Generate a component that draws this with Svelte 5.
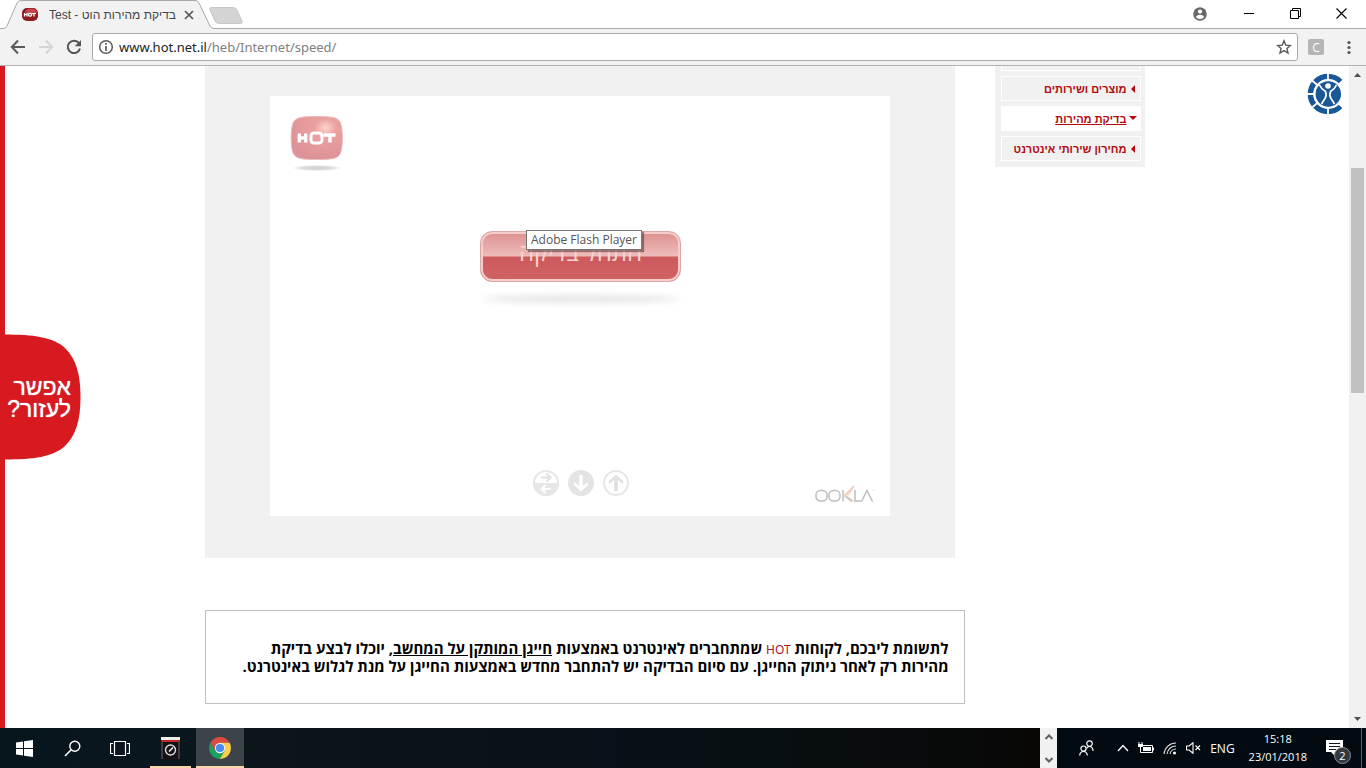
<script>
  const menu = [
    { label: 'מוצרים ושירותים', open: false },
    { label: 'בדיקת מהירות', open: true },
    { label: 'מחירון שירותי אינטרנט', open: false }
  ];
  let address = $state('www.hot.net.il/heb/Internet/speed/');
  let split = $derived(address.indexOf('/') < 0 ? address.length : address.indexOf('/'));
</script>

<div class="screen">
  <header class="titlebar">
    <div class="tab">
      <svg class="tabshape" width="246" height="29" viewBox="0 0 246 29" aria-hidden="true">
        <path d="M0 28.5H3Q6 28.5 7 26L17 3Q18 .5 21 .5H195Q198 .5 199 3L210 26Q211 28.5 214 28.5V29H0Z" fill="#f2f2f2" />
        <path d="M0 28.5H3Q6 28.5 7 26L17 3Q18 .5 21 .5H195Q198 .5 199 3L210 26Q211 28.5 214 28.5H246" fill="none" stroke="#aaa8aa" />
        <path d="M211 7.500H233Q236 7.500 237 10L242 21Q243 23.500 240 23.500H219Q216 23.500 215 21L210 10Q209 7.500 211 7.500Z" fill="#d4d4d4" stroke="#c8c8c8" />
      </svg>
      <div class="tabcontent">
        <svg width="16" height="16" viewBox="0 0 16 16" aria-hidden="true">
          <rect x="0" y="1" width="16" height="13" rx="5" fill="#8d1b20" /><ellipse cx="9" cy="5" rx="6" ry="3.500" fill="#c6444a" />
          <path d="M2.500 6V9.500M2 7.700H5M5 6V9.500M10 6.500H14M12 6V9.500" stroke="#fff" stroke-width="1.200" /><rect x="6.500" y="6.300" width="3" height="2.800" rx="1" fill="none" stroke="#fff" stroke-width="1.200" />
        </svg>
        <span class="tabtitle" dir="rtl">בדיקת מהירות הוט - Test</span>
        <button aria-label="Close tab"><svg width="10" height="10" viewBox="0 0 10 10"><path d="M1 1L9 9M9 1L1 9" stroke="#555" stroke-width="1.700" /></svg></button>
      </div>
    </div>
    <div class="winbuttons">
      <button aria-label="Profile"><svg width="14" height="14" viewBox="0 0 14 14"><circle cx="7" cy="7" r="6.800" fill="#696969" /><circle cx="7" cy="4.600" r="2.100" fill="#fff" /><path d="M2.800 9.500Q4.500 7.800 7 7.800T11.200 9.500Q10 12 7 12T2.800 9.500" fill="#fff" /></svg></button>
      <button aria-label="Minimize"><svg width="10" height="11" viewBox="0 0 10 11"><path d="M0 5.500H10" stroke="#000" /></svg></button>
      <button aria-label="Restore"><svg width="11" height="11" viewBox="0 0 11 11"><path d="M.5 2.500H8.500V10.500H.5ZM2.500 2V.5H10.500V8.500H9" fill="none" stroke="#000" /></svg></button>
      <button aria-label="Close"><svg width="11" height="11" viewBox="0 0 11 11"><path d="M.5 .5L10.500 10.500M10.500 .5L.5 10.500" stroke="#000" stroke-width="1.100" /></svg></button>
    </div>
  </header>

  <div class="toolbar">
    <button aria-label="Back"><svg width="16" height="16" viewBox="0 0 16 16"><path d="M15 8H2M8 1.500L1.800 8L8 14.500" fill="none" stroke="#5a5a5a" stroke-width="2" /></svg></button>
    <button aria-label="Forward"><svg width="16" height="16" viewBox="0 0 16 16"><path d="M1 8H14M8 1.500L14.200 8L8 14.500" fill="none" stroke="#d5d5d5" stroke-width="2" /></svg></button>
    <button aria-label="Reload"><svg width="16" height="16" viewBox="0 0 16 16"><path d="M13 4.200A6.200 6.200 0 1 0 14 9.500" fill="none" stroke="#555" stroke-width="2" /><path d="M15 1V7.200H8.800Z" fill="#555" /></svg></button>
    <div class="omnibox">
      <svg width="16" height="16" viewBox="0 0 16 16" aria-hidden="true"><circle cx="8" cy="8" r="6.300" fill="none" stroke="#5a5a5a" stroke-width="1.500" /><path d="M8 4V5.700M8 7V12" stroke="#5a5a5a" stroke-width="1.700" /></svg>
      <div class="urlwrap">
        <input aria-label="Address" bind:value={address} spellcheck="false" />
        <span class="url" aria-hidden="true">{address.slice(0, split)}<i>{address.slice(split)}</i></span>
      </div>
      <button aria-label="Bookmark"><svg width="16" height="16" viewBox="0 0 16 16"><path d="M8 1.800L9.800 6.100L14.400 6.500L10.900 9.500L12 14L8 11.600L4 14L5.100 9.500L1.600 6.500L6.200 6.100Z" fill="none" stroke="#5a5a5a" stroke-width="1.400" /></svg></button>
    </div>
    <button class="ext" aria-label="Extension C">C</button>
    <button aria-label="Menu"><svg width="16" height="16" viewBox="0 0 16 16"><circle cx="8" cy="3.500" r="1.600" fill="#555" /><circle cx="8" cy="8.500" r="1.600" fill="#555" /><circle cx="8" cy="13.500" r="1.600" fill="#555" /></svg></button>
  </div>

  <div class="viewport">
    <main class="page" dir="rtl">
      <div class="columns">
        <nav class="side">
          <div class="stub"></div>
          {#each menu as m}
            <a href="#menu" class:open={m.open}>
              <svg width="8" height="8" viewBox="0 0 8 8" aria-hidden="true"><path d={m.open ? 'M0 1H8L4 5Z' : 'M6 0V8L2 4Z'} fill="#b3080e" /></svg>
              <span>{m.label}</span>
            </a>
          {/each}
        </nav>
        <div class="content">
          <section class="panel">
            <div class="flash">
              <svg class="logo" width="56" height="56" viewBox="0 0 56 56" role="img" aria-label="HOT">
                <defs>
                  <radialGradient id="hot" cx=".67" cy=".26" r=".7"><stop offset="0" stop-color="#fad5cc" /><stop offset=".3" stop-color="#eca0a0" /><stop offset="1" stop-color="#de9398" /></radialGradient>
                  <radialGradient id="shade"><stop offset="0" stop-color="#cfcfcf" /><stop offset=".6" stop-color="#dcdcdc" /><stop offset="1" stop-color="#fff" /></radialGradient>
                </defs>
                <path d="M28 .5C46 .5 49 2 51.500 7C54 14 54 30 51.500 37C49 42 46 43.500 28 43.500S7 42 4 37C1.500 30 1.500 14 4 7C7 2 10 .5 28 .5Z" transform="translate(-1)" fill="url(#hot)" stroke="#eab9bb" />
                <path d="M9.300 17.500V26.500M9 22H15.500M15.700 17.500V26.500M33.500 19H45.500M40 19V26.500" fill="none" stroke="#fff" stroke-width="3.400" />
                <rect x="21" y="17" width="11" height="10" rx="3" fill="none" stroke="#fff" stroke-width="3" />
                <ellipse cx="27" cy="52" rx="25" ry="3" fill="url(#shade)" />
              </svg>
              <div class="startwrap">
                <button class="start">התחל בדיקה</button>
                <div class="tooltip" dir="ltr" role="tooltip">Adobe Flash Player</div>
                <div class="startshadow"></div>
              </div>
              <div class="flashfoot" dir="ltr">
                <div class="steps">
                  <svg width="28" height="28" viewBox="0 0 28 28" aria-hidden="true"><circle cx="14" cy="14" r="12" fill="#fff" stroke="#e6e6e6" stroke-width="2" /><path d="M1 14H27A13 13 0 0 1 1 14Z" fill="#e6e6e6" /><path d="M9 8.500H18M14.500 4.500L18.500 8.500L14.500 12.500" fill="none" stroke="#e0e0e0" stroke-width="2" /><path d="M19 20H10M13.500 16L9.500 20L13.500 24" fill="none" stroke="#fff" stroke-width="2" /></svg>
                  <svg width="28" height="28" viewBox="0 0 28 28" aria-hidden="true"><circle cx="14" cy="14" r="13" fill="#e4e4e4" /><path d="M14 6V19" stroke="#fff" stroke-width="3.600" /><path d="M7 13V16L14 22.500L21 16V13L14 18.500Z" fill="#fff" /></svg>
                  <svg width="28" height="28" viewBox="0 0 28 28" aria-hidden="true"><circle cx="14" cy="14" r="12" fill="#fff" stroke="#e6e6e6" stroke-width="2" /><path d="M14 22V9" stroke="#e0e0e0" stroke-width="3.600" /><path d="M7 15V12L14 5.500L21 12V15L14 9.500Z" fill="#e0e0e0" /></svg>
                </div>
                <svg class="ookla" width="60" height="20" viewBox="0 0 60 20" role="img" aria-label="OOKLA">
                  <path d="M28 12L40 1L36 9L33 12L40.500 17.500H36L30 13.500Z" fill="#f8dfcd" />
                  <g fill="none" stroke="#bdbdbd" stroke-width="1.500"><rect x="1" y="6.500" width="11" height="10.500" rx="4.500" /><rect x="14" y="6.500" width="11" height="10.500" rx="4.500" /><path d="M28 6V17.500M31 12.500L37 17.500M40 6V17H46M46.500 17.500L52 6.500L57.500 17.500" /></g>
                  <path d="M29 12L39 2" stroke="#efc9b5" stroke-width="1.500" /><circle cx="58.500" cy="6" r=".6" fill="#bbb" />
                </svg>
              </div>
            </div>
          </section>
          <section class="notice">
            <p>
              לתשומת ליבכם, לקוחות <span class="hot">HOT</span> שמתחברים לאינטרנט באמצעות <u>חייגן המותקן על המחשב</u>, יוכלו לבצע בדיקת<br />
              מהירות רק לאחר ניתוק החייגן. עם סיום הבדיקה יש להתחבר מחדש באמצעות החייגן על מנת לגלוש באינטרנט.
            </p>
          </section>
        </div>
      </div>
    </main>

    <button class="help" dir="rtl">
      <svg width="76" height="126" viewBox="0 0 76 126" aria-hidden="true"><path d="M0 .5C28 .5 48 3 60 14C71 25 75.500 40 75.500 63S71 101 60 112C48 123 28 125.500 0 125.500Z" fill="#d71920" /></svg>
      <span>אפשר<br />לעזור?</span>
    </button>

    <button class="access" aria-label="Accessibility">
      <svg width="36" height="42" viewBox="0 0 36 42">
        <path d="M34.400 7.600A19 19 0 1 0 34.400 34.400L31.200 31.200A14.500 14.500 0 1 1 31.200 10.800Z" fill="#1a5796" />
        <path d="M34.400 7.600A19 19 0 1 0 34.400 34.400" fill="none" stroke="#1a5796" stroke-width="2.500" />
        <circle cx="21.300" cy="21" r="15" fill="#fff" />
        <path d="M21 0V8M21 34V42M0 21H8M5 7.500L11 12.500M5 34.500L11 29.500" stroke="#fff" stroke-width="1.800" />
        <circle cx="21.300" cy="21" r="12.700" fill="#1a5796" />
        <circle cx="21" cy="13" r="2.800" fill="#fff" />
        <path d="M12.500 12Q14.500 16.500 18.500 18.500Q20 22 18 25.500Q16 28.500 14.500 31M29.500 12Q27.500 16.500 23.500 18.500Q22 22 24 25.500Q26 28.500 27.500 31" fill="none" stroke="#fff" stroke-width="1.700" />
      </svg>
    </button>

    <div class="scrollbar" aria-hidden="true">
      <svg width="7" height="4" viewBox="0 0 7 4"><path d="M0 4L3.500 0L7 4Z" fill="#505050" /></svg>
      <div class="track"><div class="thumb"></div></div>
      <svg width="7" height="4" viewBox="0 0 7 4"><path d="M0 0L3.500 4L7 0Z" fill="#505050" /></svg>
    </div>
  </div>

  <footer class="taskbar">
    <button class="task" aria-label="Start"><svg width="17" height="17" viewBox="0 0 17 17"><path d="M0 2.500L7 1.500V8H0ZM8 1.300L17 0V8H8ZM0 9H7V15.500L0 14.500ZM8 9H17V17L8 15.700Z" fill="#fff" /></svg></button>
    <button class="task" aria-label="Search"><svg width="17" height="17" viewBox="0 0 17 17"><circle cx="10.800" cy="6.200" r="5" fill="none" stroke="#fff" stroke-width="1.400" /><path d="M7.200 9.800L1 16" stroke="#fff" stroke-width="1.600" /></svg></button>
    <button class="task" aria-label="Task view"><svg width="20" height="15" viewBox="0 0 20 15"><path d="M4.500 .5H15.500V14.500H4.500ZM3 2.500H.5V12.500H3M17 2.500H19.500V12.500H17" fill="none" stroke="#fff" stroke-width="1.200" /></svg></button>
    <button class="task running" aria-label="Disk utility">
      <svg width="19" height="24" viewBox="0 0 19 24"><path d="M1 3H18L19 24H0Z" fill="#151313" /><path d="M1 4V23M18 4V23" stroke="#6b6b6b" /><rect x="0" y="1" width="19" height="3" fill="#eee" /><rect x="1" y="4" width="17" height="2" fill="#c12a29" /><circle cx="9.500" cy="14" r="5" fill="none" stroke="#ddd" stroke-width="1.400" /><path d="M8 15.500L12 11.500" stroke="#fff" stroke-width="1.500" /></svg>
    </button>
    <button class="task running active" aria-label="Chrome">
      <svg width="22" height="22" viewBox="0 0 22 22"><path d="M11 5.500H20.500A11 11 0 0 1 11 22Z" fill="#fdd04c" /><path d="M11 11L15.800 13.700L11 22A11 11 0 0 1 1.500 5.500L6.200 13.700Z" fill="#1da260" /><path d="M11 5.500H20.500A11 11 0 0 0 1.500 5.500L6.200 13.500Z" fill="#dd4b3e" /><circle cx="11" cy="11" r="5.200" fill="#f4f4f4" /><circle cx="11" cy="11" r="4.100" fill="#4989f4" /></svg>
    </button>
    <div class="spacer"></div>
    <div class="deskscroll">
      <button aria-label="Scroll up"><svg width="8" height="6" viewBox="0 0 8 6"><path d="M.5 5L4 1.500L7.500 5" fill="none" stroke="#606060" stroke-width="2" /></svg></button>
      <button aria-label="Scroll down"><svg width="8" height="6" viewBox="0 0 8 6"><path d="M.5 1L4 4.500L7.500 1" fill="none" stroke="#606060" stroke-width="2" /></svg></button>
    </div>
    <div class="tray">
      <button class="people" aria-label="People"><svg width="15" height="16" viewBox="0 0 15 16"><g fill="none" stroke="#fff" stroke-width="1.200"><circle cx="10.500" cy="3.600" r="2.800" /><path d="M7.500 8.500Q8.500 6.500 10.500 6.500Q13.500 6.500 14.200 11" /><circle cx="4.500" cy="8.600" r="2.600" /><path d="M.7 15.500Q1 11.500 4.500 11.500T8.300 15.500" /></g></svg></button>
      <button aria-label="Show hidden icons"><svg width="12" height="8" viewBox="0 0 12 8"><path d="M1 7L6 1.500L11 7" fill="none" stroke="#fff" stroke-width="1.300" /></svg></button>
      <button aria-label="Battery"><svg width="16" height="12" viewBox="0 0 16 12"><path d="M5 3.500H14.500V10.500H2.500V7" fill="none" stroke="#fff" /><rect x="5" y="5" width="8" height="4" fill="#fff" /><path d="M15.500 5.500V8.500M1 0V3M4 0V3M2.500 3V7" stroke="#fff" /><rect x="0" y="2" width="5" height="3" fill="#fff" /></svg></button>
      <button aria-label="Network"><svg width="14" height="14" viewBox="0 0 14 14"><g fill="none" stroke="#ddd" stroke-width="1.100"><path d="M1 13A12 12 0 0 1 13 2M4 13A9 9 0 0 1 13 5M7 13A6 6 0 0 1 13 8" /></g><circle cx="11.500" cy="12" r="1.500" fill="#fff" /></svg></button>
      <button aria-label="Volume muted"><svg width="15" height="12" viewBox="0 0 15 12"><path d="M.5 4H3L7 .8V11.200L3 8H.5ZM9.500 3.500L14 8M14 3.500L9.500 8" fill="none" stroke="#fff" stroke-width="1.100" /></svg></button>
      <span>ENG</span>
      <div class="clock"><span>15:18</span><span>23/01/2018</span></div>
      <button class="bell" aria-label="Notifications">
        <svg width="17" height="16" viewBox="0 0 17 16"><path d="M0 0H17V12H9V16L5 12H0Z" fill="#fff" /><path d="M3 3.500H14M3 6.500H14M3 9.500H10" stroke="#10151a" /></svg>
        <b>2</b>
      </button>
    </div>
  </footer>
</div>

<style>
  :global(body) { margin: 0; background: #fff; }
  .screen { display: flex; flex-direction: column; height: 100vh; overflow: hidden; font-family: "Open Sans", "Noto Sans", sans-serif; font-size: 12px; }
  button { border: 0; padding: 0; background: none; font: inherit; color: inherit; display: flex; align-items: center; justify-content: center; }
  svg { display: block; flex: none; }
  a { text-decoration: none; }

  .titlebar { display: flex; flex: none; height: 29px; background: linear-gradient(#aaa8aa, #aaa8aa) bottom / 100% 1px no-repeat #fff; justify-content: space-between; }
  .tab { display: grid; width: 246px; }
  .tabshape, .tabcontent { grid-area: 1 / 1; }
  .tabcontent { display: flex; align-items: center; padding-left: 22px; width: 172px; z-index: 1; height: 30px; }
  .tabtitle { flex: 1; margin: 0 6px 0 11px; color: #444; white-space: nowrap; overflow: hidden; text-align: left; font-family: "Liberation Sans", sans-serif; }
  .winbuttons { display: flex; align-items: center; height: 27px; padding-right: 2px; }
  .winbuttons button { width: 46px; height: 27px; }
  .winbuttons button:first-child { width: 52px; }

  .toolbar { display: flex; flex: none; align-items: center; height: 36px; padding: 0 9px 0 10px; gap: 12px; background: #f2f2f2; border-bottom: 1px solid #b3b1b3; }
  .omnibox { display: flex; flex: 1; align-items: center; box-sizing: border-box; height: 28px; margin: 0 -2px; padding: 0 5px; gap: 5px; border: 1px solid #a9a9a9; border-radius: 3px; background: #fff; }
  .urlwrap { display: grid; flex: 1; align-items: center; line-height: 20px; }
  .urlwrap input, .url { grid-area: 1 / 1; font-family: "Noto Sans", sans-serif; font-size: 13px; padding: 0; }
  .urlwrap input { border: 0; outline: 0; color: transparent; caret-color: #222; background: none; }
  .url { pointer-events: none; color: #222; white-space: nowrap; }
  .url i { font-style: normal; color: #808080; }
  .ext { width: 16px; height: 16px; margin-right: 5px; border-radius: 2px; background: #b5b5b5; color: #fff; }

  .viewport { position: relative; display: flex; flex: 1; min-height: 0; background: #fff; }
  .page { flex: 1; min-width: 0; overflow: hidden; background: linear-gradient(#d71920, #d71920) left / 5px 100% no-repeat; }
  .columns { display: flex; align-items: flex-start; gap: 30px; max-width: 940px; margin: 0 auto; }
  .side { display: flex; flex-direction: column; gap: 5px; width: 150px; box-sizing: border-box; padding: 0 4px 6px 6px; background: #f1f1f1; font: bold 11px/14px "Liberation Sans", sans-serif; }
  .stub { height: 4px; border: 1px solid #fff; border-top: 0; }
  .side a { display: flex; align-items: center; gap: 2px; height: 23px; padding: 0 3px; border: 1px solid #fff; color: #b3080e; white-space: nowrap; }
  .side a.open { background: #fff; text-decoration: underline; }
  .content { flex: 1; min-width: 0; }
  .panel { display: flex; justify-content: center; margin-right: 10px; padding: 30px 0 42px; background: #f1f1f1; }
  .flash { display: flex; flex-direction: column; align-items: center; box-sizing: border-box; width: 100%; max-width: 620px; height: 420px; padding-left: 2px; background: #fff; }
  .logo { align-self: flex-end; margin: 20px 0 0 18px; }
  .startwrap { position: relative; display: flex; flex-direction: column; align-items: center; margin-top: 59px; }
  .start { box-sizing: border-box; width: 201px; height: 51px; padding-bottom: 10px; border: 1px solid #dea6a6; border-radius: 12px; box-shadow: inset 0 0 0 2px #f6cdcd; background: linear-gradient(#dd8f8f, #eebbbb 48%, #cd5a5c 52%, #d16365); color: #f9d4d2; font: 24px/26px "Open Sans", sans-serif; }
  .startshadow { width: 196px; height: 8px; margin-top: 13px; border-radius: 50%; background: #e6e6e6; filter: blur(3px); }
  .tooltip { position: absolute; left: 46px; top: -1px; box-sizing: border-box; height: 20px; padding: 0 4px; border: 1px solid #767676; background: #fff; box-shadow: 2px 2px 1px rgba(70, 40, 40, .5); color: #555; line-height: 18px; white-space: nowrap; }
  .flashfoot { display: grid; grid-template-columns: 1fr auto 1fr; width: 100%; margin-top: auto; padding-bottom: 12px; align-items: end; }
  .steps { grid-column: 2; display: flex; gap: 7px; padding-bottom: 7px; }
  .ookla { justify-self: end; margin-right: 15px; }
  .notice { box-sizing: border-box; height: 94px; margin-top: 52px; padding: 29px 15px; border: 1px solid #c0c0c0; }
  .notice p { margin: 0; color: #000; font: bold 15px/16px "Open Sans", sans-serif; white-space: nowrap; }
  .hot { color: #a8132a; font: 12px/16px "Noto Sans", sans-serif; }

  .help { position: absolute; left: 5px; top: 268px; }
  .help span { position: absolute; right: 10px; top: 42px; color: #fff; font: 23px/22px "Liberation Sans", sans-serif; text-align: right; white-space: nowrap; text-shadow: 0 0 1px #fff; }
  .access { position: absolute; right: 23px; top: 7px; }

  .scrollbar { display: flex; flex-direction: column; align-items: center; justify-content: space-between; gap: 7px; width: 17px; padding: 7px 0 7px; box-sizing: border-box; background: #f1f1f1; }
  .track { flex: 1; width: 13px; }
  .thumb { height: 36%; margin-top: 84px; background: #c1c1c1; }

  .taskbar { display: flex; flex: none; height: 40px; color: #fff; background: linear-gradient(90deg, #07151c 0, #0b171e 15%, #0b1418 24%, #061217 45%, #090c0d 65%, #080706 76%, #020b12 78%); }
  .task { width: 48px; box-sizing: border-box; }
  .running { width: 41px; margin-left: 6px; padding-top: 1px; border-bottom: 2px solid #f9d7ad; }
  .running.active { width: 48px; background: #3c4449; margin-left: 5px; }
  .spacer { flex: 1; }
  .deskscroll { display: flex; flex-direction: column; justify-content: space-between; width: 17px; padding: 6px 0 5px; box-sizing: border-box; background: #f1f1f1; }
  .deskscroll button { align-self: center; }
  .tray { display: flex; align-items: center; gap: 9px; padding: 0 4px 0 22px; border-right: 1px solid #566068; margin-right: 4px; }
  .people { margin-right: 14px; }
  .clock { display: flex; flex-direction: column; align-items: center; margin-left: 5px; font-size: 11px; line-height: 18px; }
  .bell { position: relative; margin: 0 14px 0 10px; }
  .bell b { position: absolute; left: 8px; top: 7px; width: 15px; height: 15px; border: 1px solid #8a8d90; border-radius: 50%; background: #333a3f; font: 11px/15px "Open Sans", sans-serif; text-align: center; }
</style>
